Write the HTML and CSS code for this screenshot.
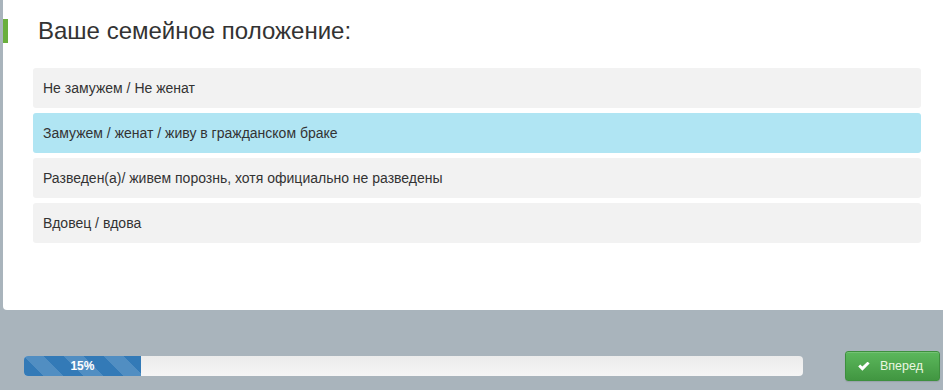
FILE: index.html
```html
<!DOCTYPE html>
<html lang="ru">
<head>
<meta charset="utf-8">
<title>Опрос</title>
<link rel="stylesheet" href="styles.css">
</head>
<body>
<div class="page">
  <section class="card">
    <h3 class="question">Ваше семейное положение:</h3>
    <ul class="options">
      <li class="option">Не замужем / Не женат</li>
      <li class="option selected">Замужем / женат / живу в гражданском браке</li>
      <li class="option">Разведен(а)/ живем порознь, хотя официально не разведены</li>
      <li class="option">Вдовец / вдова</li>
    </ul>
  </section>
  <footer class="footer">
    <div class="progress">
      <div class="progress-bar" style="width: 15%">15%</div>
    </div>
    <button class="btn-next" type="button">
      <svg class="check" viewBox="0 0 12 9" width="12" height="9" aria-hidden="true">
        <path d="M0.2 4.4 L2.2 2.4 L4.4 4.6 L9.6 -0.4 L11.6 1.6 L4.4 8.8 Z" fill="#ffffff"/>
      </svg>
      <span>Вперед</span>
    </button>
  </footer>
</div>
</body>
</html>
```
FILE: styles.css
```css
html, body {
  margin: 0;
  padding: 0;
  overflow: hidden;
}
body {
  background: #a9b4bc;
  font-family: "Liberation Sans", Arial, sans-serif;
  color: #333333;
  width: 943px;
  height: 390px;
}
.page {
  display: flex;
  flex-direction: column;
}
.card {
  background: #ffffff;
  margin: -6px -8px 0 3px;
  padding: 25px 30px 0 30px;
  height: 291px;
  border-radius: 0 0 4px 4px;
}
.question {
  margin: 0;
  height: 24px;
  line-height: 24px;
  font-size: 24px;
  font-weight: normal;
  color: #333333;
  border-left: 5px solid #6aaf3d;
  margin-left: -30px;
  padding-left: 30px;
}
.options {
  list-style: none;
  margin: 25px 0 0 0;
  padding: 0;
  display: flex;
  flex-direction: column;
  gap: 5px;
}
.option {
  height: 40px;
  line-height: 40px;
  padding: 0 10px;
  font-size: 14px;
  background: #f2f2f2;
  border-radius: 3px;
  color: #333333;
}
.option.selected {
  background: #b0e5f3;
}
.footer {
  display: flex;
  align-items: center;
  padding: 0 3px 0 24px;
  margin-top: 41px;
  gap: 42px;
}
.progress {
  width: 779px;
  height: 20px;
  background: #f3f3f3;
  background-image: linear-gradient(to bottom, #ebebeb 0%, #f5f5f5 100%);
  border-radius: 4px;
  overflow: hidden;
  display: flex;
}
.progress-bar {
  background-color: #337ab7;
  background-image: linear-gradient(45deg, rgba(255,255,255,.15) 25%, transparent 25%, transparent 50%, rgba(255,255,255,.15) 50%, rgba(255,255,255,.15) 75%, transparent 75%, transparent);
  background-size: 40px 40px;
  color: #ffffff;
  font-size: 12px;
  font-weight: bold;
  line-height: 20px;
  text-align: center;
}
.btn-next {
  box-sizing: border-box;
  width: 95px;
  height: 30px;
  display: flex;
  align-items: center;
  gap: 10px;
  padding: 0 0 0 12px;
  border: 1px solid #3e8f3e;
  border-radius: 3px;
  background-image: linear-gradient(to bottom, #5cb85c 0%, #419641 100%);
  color: #eaf7e0;
  font-family: "Liberation Sans", Arial, sans-serif;
  font-size: 12.5px;
  box-shadow: inset 0 1px 0 rgba(255,255,255,.15), 0 1px 1px rgba(0,0,0,.1);
  cursor: pointer;
}
.check {
  display: block;
}
```
